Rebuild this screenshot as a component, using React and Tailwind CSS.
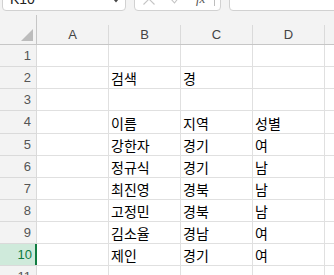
import React from "react";

const rows = [
  { n: 1, h: "h-[22px]", c: ["", "", "", ""] },
  { n: 2, h: "h-[22px]", c: ["", "검색", "경", ""] },
  { n: 3, h: "h-[22px]", c: ["", "", "", ""] },
  { n: 4, h: "h-[23px]", c: ["", "이름", "지역", "성별"] },
  { n: 5, h: "h-[22px]", c: ["", "강한자", "경기", "여"] },
  { n: 6, h: "h-[22px]", c: ["", "정규식", "경기", "남"] },
  { n: 7, h: "h-[22px]", c: ["", "최진영", "경북", "남"] },
  { n: 8, h: "h-[22px]", c: ["", "고정민", "경북", "남"] },
  { n: 9, h: "h-[22px]", c: ["", "김소율", "경남", "여"] },
  { n: 10, h: "h-[22px]", c: ["", "제인", "경기", "여"], sel: true },
  { n: 11, h: "h-[22px]", c: ["", "", "", ""] },
];

const uiFont = { fontFamily: '"Liberation Sans", Arial, sans-serif' };
const krFont = { fontFamily: '"Noto Sans CJK KR", "Noto Sans", sans-serif' };

export default function App() {
  return (
    <div className="w-[334px] h-[275px] overflow-hidden bg-white relative">
      {/* toolbar */}
      <div className="flex items-start h-[15px] overflow-hidden bg-[#f3f3f3]">
        <div
          className="ml-[2px] -mt-[14px] w-[124px] h-[25px] shrink-0 rounded-[4px] border border-[#d1d1d1] bg-white flex items-center justify-between pl-[7px] pr-[5px] text-[14px] text-[#222]"
          style={uiFont}
        >
          <span className="pt-[1px]">K10</span>
          <svg width="8" height="6" viewBox="0 0 8 6" className="mt-[3px]">
            <path d="M1 1 L4 4.5 L7 1" fill="none" stroke="#444" strokeWidth="1.2" />
          </svg>
        </div>
        <div className="ml-[8px] -mt-[14px] w-[87px] h-[25px] shrink-0 rounded-[4px] border border-[#d1d1d1] bg-white flex items-center pl-[7px]">
          <svg width="14" height="14" viewBox="0 0 14 14">
            <path d="M1.5 1.5 L12.5 12.5 M12.5 1.5 L1.5 12.5" stroke="#c4c4c4" strokeWidth="1.1" fill="none" />
          </svg>
          <svg width="12" height="12" viewBox="0 0 12 12" className="ml-[14px] mt-[1px]">
            <path d="M0.5 5.5 L4.5 10 L11.5 1" stroke="#c4c4c4" strokeWidth="1.1" fill="none" />
          </svg>
          <span className="ml-[14px] italic text-[13px] text-[#555] mt-[1px]" style={{ fontFamily: '"Liberation Serif", serif' }}>
            fx
          </span>
          <div className="ml-[9px] w-[1px] h-[14px] bg-[#bdbdbd] mt-[1px]" />
        </div>
        <div className="ml-[8px] -mt-[14px] flex-1 -mr-[10px] h-[25px] rounded-[4px] border border-[#d1d1d1] bg-white" />
      </div>

      {/* column header */}
      <div className="flex h-[30px] bg-[#f3f3f3]" style={uiFont}>
        <div className="w-[37px] shrink-0 border-r border-b border-[#c6c6c6] flex items-end justify-end pr-[3px] pb-[3px]">
          <svg width="12" height="12" viewBox="0 0 12 12">
            <path d="M12 0 L12 12 L0 12 Z" fill="#bcbcbc" />
          </svg>
        </div>
        {["A", "B", "C", "D", ""].map((l, i) => (
          <div
            key={i}
            className={
              (i < 4 ? "w-[72px] shrink-0 " : "flex-1 ") +
              "flex flex-col border-b border-[#c6c6c6]"
            }
          >
            <div className="h-[11px]" />
            <div
              className={
                "flex-1 flex items-center justify-center text-[13px] text-[#444] " +
                (i < 4 ? "border-r border-[#dadada]" : "")
              }
            >
              {l}
            </div>
          </div>
        ))}
      </div>

      {/* rows */}
      {rows.map((r) => (
        <div key={r.n} className={"flex " + r.h}>
          <div
            className={
              "w-[37px] shrink-0 flex items-center justify-end border-b text-[13px] " +
              (r.sel
                ? "bg-[#cfeadb] text-[#107c41] border-[#dadada] pr-[5px]"
                : "bg-[#f3f3f3] text-[#555] border-r border-[#dadada] pr-[5px]")
            }
            style={uiFont}
          >
            <span className={r.n === 11 ? "mt-[1px]" : ""}>{r.n}</span>
            {r.sel && <div className="hidden" />}
          </div>
          {r.sel && <div className="w-0 relative"><div className="absolute right-0 top-0 w-[2px] h-[21px] bg-[#107c41]" /></div>}
          {r.c.map((t, i) => (
            <div
              key={i}
              className="w-[72px] shrink-0 border-r border-b border-[#e0e0e0] flex items-center pl-[2px] pt-[2px] text-[14px] text-black"
              style={krFont}
            >
              {t}
            </div>
          ))}
          <div className="flex-1 border-b border-[#e0e0e0]" />
        </div>
      ))}
    </div>
  );
}
